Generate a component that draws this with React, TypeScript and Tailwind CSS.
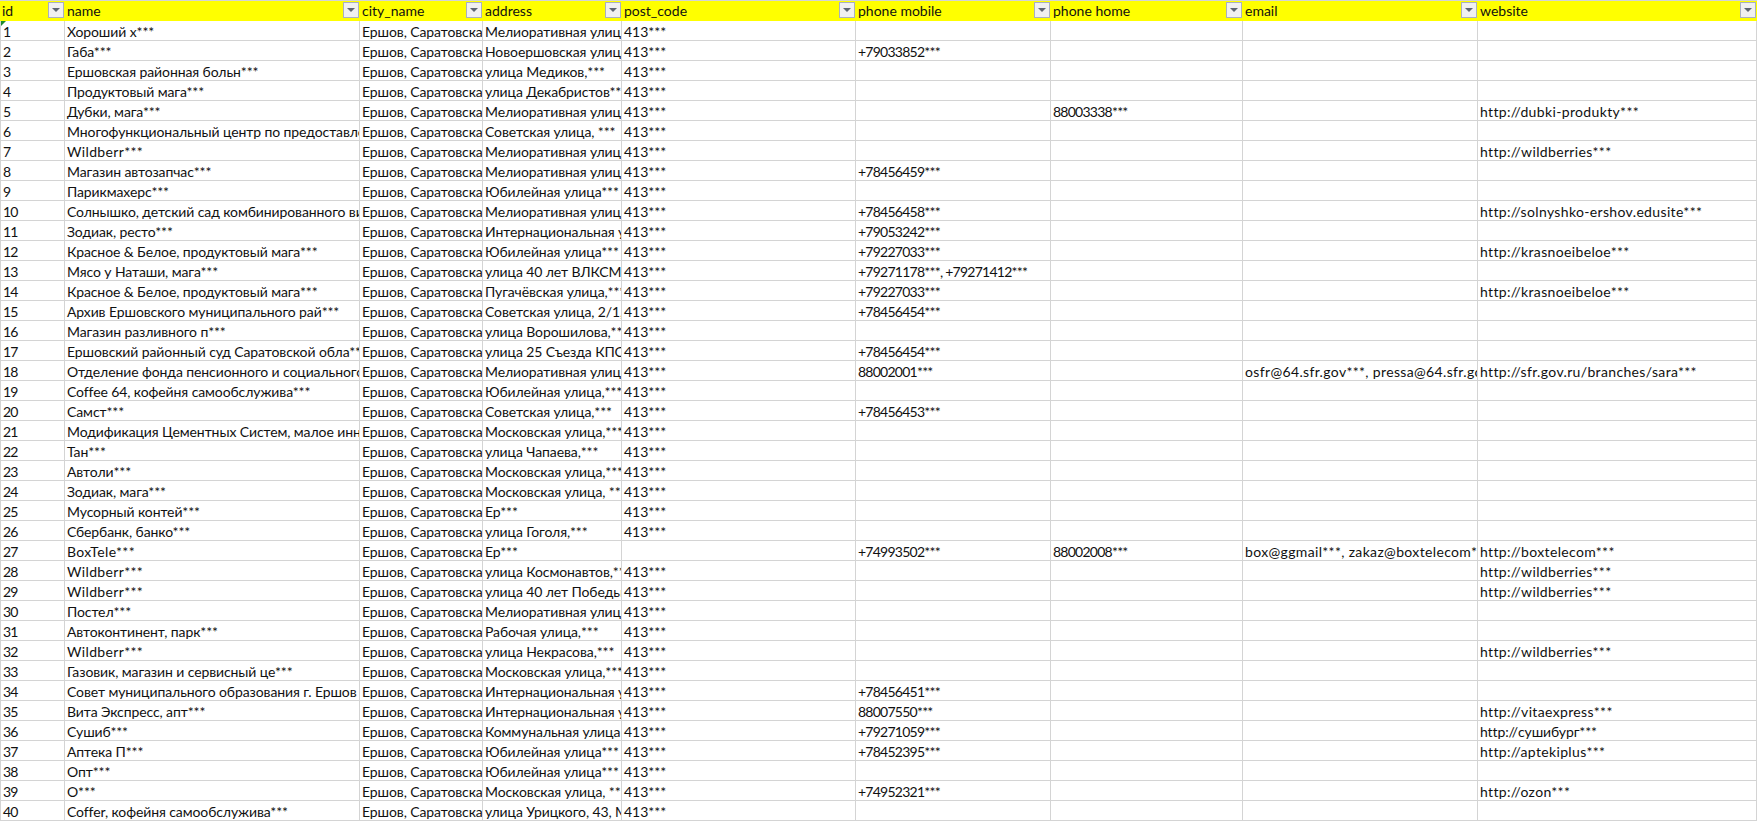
const COLUMNS = [
  { key: "id", width: "w-[65px]" },
  { key: "name", width: "w-[295px]" },
  { key: "city_name", width: "w-[123px]" },
  { key: "address", width: "w-[139px]" },
  { key: "post_code", width: "w-[234px]" },
  { key: "phone mobile", width: "w-[195px]" },
  { key: "phone home", width: "w-[192px]" },
  { key: "email", width: "w-[235px]" },
  { key: "website", width: "w-[279px]" },
];

const CITY = "Ершов, Саратовская область";
const POST = "413***";
const MEL = "Мелиоративная улица, 1";
const INT = "Интернациональная улица";
const JUB = "Юбилейная улица***";
const WB = "http://wildberries***";
const KB = "http://krasnoeibeloe***";

// name, address, post, mobile, home, email, website
const ROWS: string[][] = [
  ["Хороший х***", MEL, POST, "", "", "", ""],
  ["Габа***", "Новоершовская улица", POST, "+79033852***", "", "", ""],
  ["Ершовская районная больн***", "улица Медиков,***", POST, "", "", "", ""],
  ["Продуктовый мага***", "улица Декабристов***", POST, "", "", "", ""],
  ["Дубки, мага***", MEL, POST, "", "88003338***", "", "http://dubki-produkty***"],
  ["Многофункциональный центр по предоставлению услуг", "Советская улица, ***", POST, "", "", "", ""],
  ["Wildberr***", MEL, POST, "", "", "", WB],
  ["Магазин автозапчас***", MEL, POST, "+78456459***", "", "", ""],
  ["Парикмахерс***", JUB, POST, "", "", "", ""],
  ["Солнышко, детский сад комбинированного вида", MEL, POST, "+78456458***", "", "", "http://solnyshko-ershov.edusite***"],
  ["Зодиак, ресто***", INT, POST, "+79053242***", "", "", ""],
  ["Красное & Белое, продуктовый мага***", JUB, POST, "+79227033***", "", "", KB],
  ["Мясо у Наташи, мага***", "улица 40 лет ВЛКСМ***", POST, "+79271178***, +79271412***", "", "", ""],
  ["Красное & Белое, продуктовый мага***", "Пугачёвская улица,***", POST, "+79227033***", "", "", KB],
  ["Архив Ершовского муниципального рай***", "Советская улица, 2/1,***", POST, "+78456454***", "", "", ""],
  ["Магазин разливного п***", "улица Ворошилова,***", POST, "", "", "", ""],
  ["Ершовский районный суд Саратовской обла***", "улица 25 Съезда КПСС", POST, "+78456454***", "", "", ""],
  ["Отделение фонда пенсионного и социального страхования", MEL, POST, "88002001***", "", "osfr@64.sfr.gov***, pressa@64.sfr.gov***", "http://sfr.gov.ru/branches/sara***"],
  ["Coffee 64, кофейня самообслужива***", "Юбилейная улица,***", POST, "", "", "", ""],
  ["Самст***", "Советская улица,***", POST, "+78456453***", "", "", ""],
  ["Модификация Цементных Систем, малое инновационное", "Московская улица,***", POST, "", "", "", ""],
  ["Тан***", "улица Чапаева,***", POST, "", "", "", ""],
  ["Автоли***", "Московская улица,***", POST, "", "", "", ""],
  ["Зодиак, мага***", "Московская улица, ***", POST, "", "", "", ""],
  ["Мусорный контей***", "Ер***", POST, "", "", "", ""],
  ["Сбербанк, банко***", "улица Гоголя,***", POST, "", "", "", ""],
  ["BoxTele***", "Ер***", "", "+74993502***", "88002008***", "box@ggmail***, zakaz@boxtelecom***", "http://boxtelecom***"],
  ["Wildberr***", "улица Космонавтов,***", POST, "", "", "", WB],
  ["Wildberr***", "улица 40 лет Победы,***", POST, "", "", "", WB],
  ["Постел***", MEL, POST, "", "", "", ""],
  ["Автоконтинент, парк***", "Рабочая улица,***", POST, "", "", "", ""],
  ["Wildberr***", "улица Некрасова,***", POST, "", "", "", WB],
  ["Газовик, магазин и сервисный це***", "Московская улица,***", POST, "", "", "", ""],
  ["Совет муниципального образования г. Ершов", INT, POST, "+78456451***", "", "", ""],
  ["Вита Экспресс, апт***", INT, POST, "88007550***", "", "", "http://vitaexpress***"],
  ["Сушиб***", "Коммунальная улица", POST, "+79271059***", "", "", "http://сушибург***"],
  ["Аптека П***", JUB, POST, "+78452395***", "", "", "http://aptekiplus***"],
  ["Опт***", JUB, POST, "", "", "", ""],
  ["О***", "Московская улица, ***", POST, "+74952321***", "", "", "http://ozon***"],
  ["Coffer, кофейня самообслужива***", "улица Урицкого, 43, М***", POST, "", "", "", ""],
];

// Lato runs wider on digits and narrower on latin than the sheet font
function tracking(col: number, v: string) {
  if (col === 0 || col === 5 || col === 6) return "tracking-[-0.75px]";
  if (col === 4) return "tracking-normal";
  if (/[а-яё]/i.test(v)) return "tracking-[-0.1px]";
  return "tracking-[0.35px]";
}

function FilterButton() {
  return (
    <span className="absolute right-0 top-[1px] flex h-[16px] w-[16px] items-center justify-center border border-[#a9b0c0] bg-[#f0f0f0]">
      <span className="h-0 w-0 border-x-[4px] border-t-[4px] border-x-transparent border-t-[#5f6673]" />
    </span>
  );
}

export default function App() {
  return (
    <div className="h-[821px] w-[1757px] overflow-hidden bg-white font-['Lato','Open_Sans',sans-serif] text-[14px] leading-[19px] text-[#111111]">
      <div className="flex h-[21px] border-t border-[#d4d4d4] bg-[#ffff00]">
        {COLUMNS.map((c) => (
          <div
            key={c.key}
            className={`relative h-[20px] shrink-0 overflow-hidden whitespace-nowrap border-r border-transparent pl-[2px] ${c.width}`}
          >
            {c.key}
            <FilterButton />
          </div>
        ))}
      </div>
      {ROWS.map((r, n) => {
        const cells = [String(n + 1), r[0], CITY, ...r.slice(1)];
        return (
          <div key={n} className="relative flex h-[20px] border-b border-[#d4d4d4]">
            {n === 0 && (
              <span className="absolute left-[1px] top-0 h-0 w-0 border-r-[5px] border-t-[5px] border-r-transparent border-t-[#1e8a2e]" />
            )}
            {cells.map((v, i) => (
              <div
                key={i}
                className={`shrink-0 overflow-hidden whitespace-nowrap border-r border-[#d4d4d4] pl-[2px] pt-px ${COLUMNS[i].width} ${i === 0 ? "border-l" : ""} ${tracking(i, v)}`}
              >
                {v}
              </div>
            ))}
          </div>
        );
      })}
    </div>
  );
}
